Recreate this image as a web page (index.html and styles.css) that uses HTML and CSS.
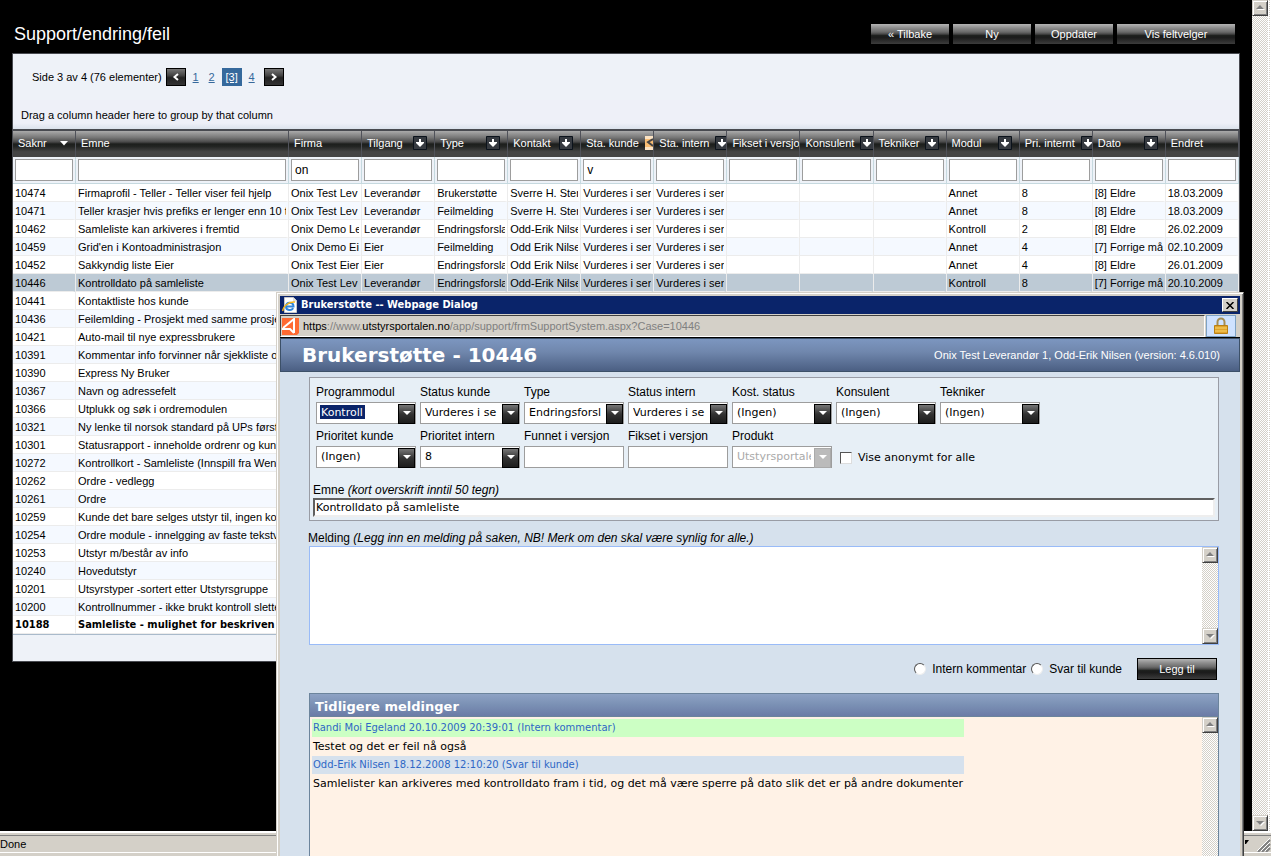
FILE: index.html
```html
<!DOCTYPE html>
<html lang="no">
<head>
<meta charset="utf-8">
<title>Support/endring/feil</title>
<link rel="stylesheet" href="styles.css">
</head>
<body>
<svg class="defs" width="0" height="0" aria-hidden="true">
  <symbol id="filter" viewBox="0 0 14 14"><path d="M.5.5h13v13H.5z" fill="#363a40" stroke="#0b121b"/><path d="M6 3h2v3h3v1L7 11 3 7V6h3z" fill="#fff"/></symbol>
  <symbol id="filter-on" viewBox="0 0 14 14"><path d="M0 0h14v14H0z" fill="#f9bd73"/><path d="M0 0h14v3H0zM0 11h14v3H0z" fill="#fbe3c4"/><path d="M8 3 3 6l5 4" stroke="#444" stroke-width="2" fill="none"/></symbol>
  <symbol id="up" viewBox="0 0 16 16"><path d="M5 10h8L9 6z" fill="#fff"/><path d="M4 9h8L8 5z" fill="#808080"/></symbol>
  <symbol id="down" viewBox="0 0 16 16"><path d="M5 7h8l-4 4z" fill="#fff"/><path d="M4 6h8l-4 4z" fill="#808080"/></symbol>
</svg>
<div class="screen">
  <main class="page">
    <header class="top">
      <h1>Support/endring/feil</h1>
      <nav class="actions">
        <button class="dark">« Tilbake</button>
        <button class="dark">Ny</button>
        <button class="dark">Oppdater</button>
        <button class="dark wide">Vis feltvelger</button>
      </nav>
    </header>
    <section class="panel">
      <div class="pager">
        <span>Side 3 av 4 (76 elementer)</span>
        <button class="step" aria-label="Forrige"><svg width="8" height="8" viewBox="0 0 8 8"><path d="M6 1 2.500 4 6 7" fill="none" stroke="#fff" stroke-width="2"/></svg></button>
        <a href="#">1</a><a href="#">2</a><a class="current" href="#">[3]</a><a href="#">4</a>
        <button class="step" aria-label="Neste"><svg width="8" height="8" viewBox="0 0 8 8"><path d="M2 1 5.500 4 2 7" fill="none" stroke="#fff" stroke-width="2"/></svg></button>
      </div>
      <div class="group">Drag a column header here to group by that column</div>
      <table class="grid">
        <colgroup><col class="c-id"><col class="c-subject"><col span="13"></colgroup>
        <thead>
          <tr class="heads">
            <th><div><span>Saknr</span><svg width="8" height="5" viewBox="0 0 8 5"><path d="M0 0h8L4 4.500z" fill="#fff"/></svg></div></th>
            <th><div><span>Emne</span></div></th>
            <th><div><span>Firma</span></div></th>
            <th><div><span>Tilgang</span><svg width="14" height="14"><use href="#filter"/></svg></div></th>
            <th><div><span>Type</span><svg width="14" height="14"><use href="#filter"/></svg></div></th>
            <th><div><span>Kontakt</span><svg width="14" height="14"><use href="#filter"/></svg></div></th>
            <th><div><span>Sta. kunde</span><svg width="14" height="14"><use href="#filter-on"/></svg></div></th>
            <th><div><span>Sta. intern</span><svg width="14" height="14"><use href="#filter"/></svg></div></th>
            <th><div><span>Fikset i versjon</span></div></th>
            <th><div><span>Konsulent</span><svg width="14" height="14"><use href="#filter"/></svg></div></th>
            <th><div><span>Tekniker</span><svg width="14" height="14"><use href="#filter"/></svg></div></th>
            <th><div><span>Modul</span><svg width="14" height="14"><use href="#filter"/></svg></div></th>
            <th><div><span>Pri. internt</span><svg width="14" height="14"><use href="#filter"/></svg></div></th>
            <th><div><span>Dato</span><svg width="14" height="14"><use href="#filter"/></svg></div></th>
            <th><div><span>Endret</span></div></th>
          </tr>
          <tr class="filters">
            <td><input aria-label="Saknr"></td><td><input aria-label="Emne"></td><td><input aria-label="Firma" value="on"></td><td><input aria-label="Tilgang"></td><td><input aria-label="Type"></td><td><input aria-label="Kontakt"></td><td><input aria-label="Sta. kunde" value="v"></td><td><input aria-label="Sta. intern"></td><td><input aria-label="Fikset i versjon"></td><td><input aria-label="Konsulent"></td><td><input aria-label="Tekniker"></td><td><input aria-label="Modul"></td><td><input aria-label="Pri. internt"></td><td><input aria-label="Dato"></td><td><input aria-label="Endret"></td>
          </tr>
        </thead>
        <tbody>
          <tr><td>10474</td><td>Firmaprofil - Teller - Teller viser feil hjelp</td><td>Onix Test Lev</td><td>Leverandør</td><td>Brukerstøtte</td><td>Sverre H. Sten</td><td>Vurderes i sen</td><td>Vurderes i sen</td><td></td><td></td><td></td><td>Annet</td><td>8</td><td>[8] Eldre</td><td>18.03.2009</td></tr>
          <tr><td>10471</td><td>Teller krasjer hvis prefiks er lenger enn 10 t</td><td>Onix Test Lev</td><td>Leverandør</td><td>Feilmelding</td><td>Sverre H. Sten</td><td>Vurderes i sen</td><td>Vurderes i sen</td><td></td><td></td><td></td><td>Annet</td><td>8</td><td>[8] Eldre</td><td>18.03.2009</td></tr>
          <tr><td>10462</td><td>Samleliste kan arkiveres i fremtid</td><td>Onix Demo Le</td><td>Leverandør</td><td>Endringsforsla</td><td>Odd-Erik Nilse</td><td>Vurderes i sen</td><td>Vurderes i sen</td><td></td><td></td><td></td><td>Kontroll</td><td>2</td><td>[8] Eldre</td><td>26.02.2009</td></tr>
          <tr><td>10459</td><td>Grid'en i Kontoadministrasjon</td><td>Onix Demo Eie</td><td>Eier</td><td>Feilmelding</td><td>Odd Erik Nilsen</td><td>Vurderes i sen</td><td>Vurderes i sen</td><td></td><td></td><td></td><td>Annet</td><td>4</td><td>[7] Forrige må</td><td>02.10.2009</td></tr>
          <tr><td>10452</td><td>Sakkyndig liste Eier</td><td>Onix Test Eier</td><td>Eier</td><td>Endringsforsla</td><td>Odd Erik Nilsen</td><td>Vurderes i sen</td><td>Vurderes i sen</td><td></td><td></td><td></td><td>Annet</td><td>4</td><td>[8] Eldre</td><td>26.01.2009</td></tr>
          <tr class="selected"><td>10446</td><td>Kontrolldato på samleliste</td><td>Onix Test Lev</td><td>Leverandør</td><td>Endringsforsla</td><td>Odd-Erik Nilse</td><td>Vurderes i sen</td><td>Vurderes i sen</td><td></td><td></td><td></td><td>Kontroll</td><td>8</td><td>[7] Forrige må</td><td>20.10.2009</td></tr>
          <tr><td>10441</td><td>Kontaktliste hos kunde</td><td colspan="13"></td></tr>
          <tr><td>10436</td><td>Feilemlding - Prosjekt med samme prosjek</td><td colspan="13"></td></tr>
          <tr><td>10421</td><td>Auto-mail til nye expressbrukere</td><td colspan="13"></td></tr>
          <tr><td>10391</td><td>Kommentar info forvinner når sjekkliste op</td><td colspan="13"></td></tr>
          <tr><td>10390</td><td>Express Ny Bruker</td><td colspan="13"></td></tr>
          <tr><td>10367</td><td>Navn og adressefelt</td><td colspan="13"></td></tr>
          <tr><td>10366</td><td>Utplukk og søk i ordremodulen</td><td colspan="13"></td></tr>
          <tr><td>10321</td><td>Ny lenke til norsok standard på UPs første</td><td colspan="13"></td></tr>
          <tr><td>10301</td><td>Statusrapport - inneholde ordrenr og kun</td><td colspan="13"></td></tr>
          <tr><td>10272</td><td>Kontrollkort - Samleliste (Innspill fra Wena</td><td colspan="13"></td></tr>
          <tr><td>10262</td><td>Ordre - vedlegg</td><td colspan="13"></td></tr>
          <tr><td>10261</td><td>Ordre</td><td colspan="13"></td></tr>
          <tr><td>10259</td><td>Kunde det bare selges utstyr til, ingen ko</td><td colspan="13"></td></tr>
          <tr><td>10254</td><td>Ordre module - innelgging av faste tekstv</td><td colspan="13"></td></tr>
          <tr><td>10253</td><td>Utstyr m/består av info</td><td colspan="13"></td></tr>
          <tr><td>10240</td><td>Hovedutstyr</td><td colspan="13"></td></tr>
          <tr><td>10201</td><td>Utsyrstyper -sortert etter Utstyrsgruppe</td><td colspan="13"></td></tr>
          <tr><td>10200</td><td>Kontrollnummer - ikke brukt kontroll slette</td><td colspan="13"></td></tr>
          <tr class="unread"><td>10188</td><td>Samleliste - mulighet for beskriven</td><td colspan="13"></td></tr>
        </tbody>
      </table>
      <div class="foot"></div>
    </section>
  </main>
  <div class="scroll page-scroll"><button aria-label="Rull opp"><svg width="16" height="16"><use href="#up"/></svg></button><button aria-label="Rull ned"><svg width="16" height="16"><use href="#down"/></svg></button></div>
  <footer class="status"><div><span>Done</span><svg class="grip" width="26" height="16" viewBox="0 0 26 16"><path d="M0 4h4L1 8H0z" fill="#000"/><path d="M13 16 25 4M17 16l8-8M21 16l4-4" stroke="#808080" stroke-width="2"/><path d="M12 15 25 2M16 15l9-9M20 15l5-5" stroke="#fff"/></svg></div></footer>
</div>

<section class="dialog" role="dialog" aria-labelledby="dlg-title">
  <div class="titlebar">
    <svg width="16" height="16" viewBox="0 0 16 16"><path d="M2.500.5h9l3 3v12h-12z" fill="#fff" stroke="#c9c9c9"/><path d="M11 .5v4h4" fill="#ddd"/><path d="M4 9.500h7.500c0-5-7.500-5-7.500 0 0 4.500 6 4.500 7 1.500" fill="none" stroke="#2f86dc" stroke-width="2"/><path d="M1 14C0 11 6 4 13 5" fill="none" stroke="#f3b51b" stroke-width="1.500"/></svg>
    <span id="dlg-title">Brukerstøtte -- Webpage Dialog</span>
    <button class="close" aria-label="Lukk"><svg width="8" height="7" viewBox="0 0 8 7"><path d="m.5 0 7 7M7.500 0l-7 7" stroke="#000" stroke-width="1.500"/></svg></button>
  </div>
  <div class="address">
    <div class="url"><svg width="17" height="17" viewBox="0 0 17 17"><path d="M0 0h17v15l-2 2H0z" fill="#ff6a32"/><path d="M1 10 12 1v14M0 11h8l4 4" fill="none" stroke="#fff" stroke-width="2"/></svg><span><b>https</b>://www.<b>utstyrsportalen.no</b>/app/support/frmSupportSystem.aspx?Case=10446</span></div>
    <div class="lock"><svg width="16" height="18" viewBox="0 0 16 18"><path d="M4.500 9V5a3.500 3.500 0 0 1 7 0v4" fill="none" stroke="#a78d52" stroke-width="2"/><path d="M1.500 8.500h13v8h-13z" fill="#e0a32c" stroke="#b98016"/><path d="M2 11h12M2 14h12" stroke="#f8d66c"/></svg></div>
  </div>
  <header class="case"><h2>Brukerstøtte - 10446</h2><span>Onix Test Leverandør 1, Odd-Erik Nilsen (version: 4.6.010)</span></header>
  <form class="form">
    <div class="box">
      <div class="fields">
        <label>Programmodul<span class="pick"><select class="marked"><option>Kontroll</option></select></span></label>
        <label>Status kunde<span class="pick"><select><option>Vurderes i se</option></select></span></label>
        <label>Type<span class="pick"><select><option>Endringsforsl</option></select></span></label>
        <label>Status intern<span class="pick"><select><option>Vurderes i se</option></select></span></label>
        <label>Kost. status<span class="pick"><select><option>(Ingen)</option></select></span></label>
        <label>Konsulent<span class="pick"><select><option>(Ingen)</option></select></span></label>
        <label>Tekniker<span class="pick"><select><option>(Ingen)</option></select></span></label>
        <label>Prioritet kunde<span class="pick"><select><option>(Ingen)</option></select></span></label>
        <label>Prioritet intern<span class="pick"><select><option>8</option></select></span></label>
        <label>Funnet i versjon<input class="text"></label>
        <label>Fikset i versjon<input class="text"></label>
        <label>Produkt<span class="pick off"><select disabled><option>Utstyrsportale</option></select></span></label>
        <label class="check"><input type="checkbox">Vise anonymt for alle</label>
      </div>
      <label class="subject"><span>Emne <i>(kort overskrift inntil 50 tegn)</i></span><input value="Kontrolldato på samleliste"></label>
    </div>
    <label class="msg-label" for="msg">Melding <i>(Legg inn en melding på saken, NB! Merk om den skal være synlig for alle.)</i></label>
    <div class="msg"><textarea id="msg"></textarea><div class="scroll"><button type="button" aria-label="Rull opp"><svg width="16" height="16"><use href="#up"/></svg></button><button type="button" aria-label="Rull ned"><svg width="16" height="16"><use href="#down"/></svg></button></div></div>
    <div class="send">
      <label><input type="radio" name="kind">Intern kommentar</label>
      <label><input type="radio" name="kind">Svar til kunde</label>
      <button type="button" class="dark">Legg til</button>
    </div>
    <section class="log">
      <h3>Tidligere meldinger</h3>
      <div class="log-body">
        <div class="entries">
          <div class="meta internal">Randi Moi Egeland 20.10.2009 20:39:01 (Intern kommentar)</div>
          <p>Testet og det er feil nå også</p>
          <div class="meta">Odd-Erik Nilsen 18.12.2008 12:10:20 (Svar til kunde)</div>
          <p>Samlelister kan arkiveres med kontrolldato fram i tid, og det må være sperre på dato slik det er på andre dokumenter</p>
        </div>
        <div class="scroll"><button type="button" aria-label="Rull opp"><svg width="16" height="16"><use href="#up"/></svg></button></div>
      </div>
    </section>
  </form>
</section>
</body>
</html>
```
FILE: styles.css
```css
:root {
  --ui: "Liberation Sans", Arial, sans-serif;
  --strong: "DejaVu Sans Condensed", sans-serif;
  --wide: "DejaVu Sans", sans-serif;
  --face: #d4d0c8;
  --line: #ececec;
  --gloss: linear-gradient(#b4b4b4 0, #8c8c8c 20%, #6a6a6a 40%, #484848 50%, #1c1e1c 58%, #1c1c1c 68%, #3c3c3c 100%);
}
* { box-sizing: border-box; }
body { margin: 0; height: 100vh; overflow: hidden; background: #000; font: 11px/16px var(--ui); color: #000; }
button, input, select, textarea { font: inherit; margin: 0; padding: 0; border-radius: 0; }
svg { display: block; flex: none; }
.defs { position: absolute; }
.screen { height: 100vh; display: grid; grid-template: minmax(0, 1fr) 25px / minmax(0, 1fr) 19px; }
.page { padding: 0 12px; overflow: hidden; }
.top { display: flex; align-items: center; justify-content: space-between; height: 53px; padding: 15px 5px 0 2px; }
h1 { margin: 0; font-size: 18px; line-height: 24px; font-weight: 400; color: #fff; }
.actions { display: flex; gap: 4px; }
.dark { width: 78px; height: 20px; border: 0; background: var(--gloss); color: #fff; }
.dark.wide { width: 118px; }
.panel { border: 1px solid #484a50; background: #eef2f8; }
.pager { display: flex; align-items: center; height: 46px; padding-left: 19px; }
.pager a { width: 16px; text-align: center; color: #35699c; }
.pager a.current { width: 20px; line-height: 18px; margin: 0 2px; background: #35699c; color: #fff; }
.step { display: grid; place-items: center; width: 20px; height: 18px; margin: 0 2px 0 4px; border: 1px solid #000; background: linear-gradient(#777, #444 40%, #222 55%, #333); }
.group { height: 29px; padding: 7px 8px 0; background: linear-gradient(#eef0f8 80%, #dbe2ec); }
.grid { width: 100%; table-layout: fixed; border-spacing: 0; border-top: 2px solid #484a50; border-bottom: 1px solid #a9bacb; background: #fff; }
.c-id { width: 63px; }
.c-subject { width: 213px; }
.heads th { height: 26px; padding: 0; overflow: hidden; border-right: 1px solid #50525a; background: linear-gradient(#aaa 0, #777 25%, #4a4a4a 42%, #1c1e1c 50%, #232523 60%, #444 80%, #444 100%); color: #fff; font-weight: 400; }
.heads div { display: flex; align-items: center; justify-content: space-between; gap: 6px; padding: 0 7px 2px 5px; white-space: nowrap; }
.filters td { height: 27px; padding: 1px 2px; background: #eef2f8; border-right: 1px solid #c6d9df; border-bottom: 1px solid #c6d9df; }
.filters input { display: block; width: 100%; height: 22px; padding: 0 3px; border: 1px solid #9d9d9d; font-size: 12px; background: #fff; }
/* The transparent right border clips long values short of the column line. */
tbody td { height: 18px; padding: 0 0 0 2px; line-height: 16px; overflow: hidden; white-space: nowrap; border-right: 3px solid transparent; border-bottom: 1px solid var(--line); background: linear-gradient(var(--line), var(--line)) right / 1px 100% no-repeat border-box #fff; }
tbody tr:nth-child(even) td { background-color: #f5f9ff; }
tbody tr.selected td { background-color: #bdcad5; }
.unread { font-family: var(--strong); font-weight: 700; }
.foot { height: 26px; }
.scroll { display: flex; flex-direction: column; justify-content: space-between; width: 16px; background: repeating-conic-gradient(#d4d0c8 0 25%, #fff 0 50%) 0 0 / 2px 2px; }
.scroll button { width: 16px; height: 16px; border: 1px solid; border-color: var(--face) #404040 #404040 var(--face); background: var(--face); box-shadow: inset 1px 1px #fff, inset -1px -1px #808080; }
.scroll button svg { margin: -1px; }
.page-scroll { width: 19px; border-right: 3px double #fff; }
.status { grid-column: 1 / -1; padding: 4px 0 3px; background: var(--face); box-shadow: inset 0 2px #fff; }
.status div { height: 18px; display: flex; justify-content: space-between; border-top: 1px solid #808080; border-bottom: 1px solid #fff; }

.dialog { position: absolute; left: 276px; top: 292px; right: 27px; bottom: 0; display: flex; flex-direction: column; padding: 3px 3px 0; border: 1px solid; border-color: var(--face) #404040 var(--face) var(--face); border-bottom: 0; background: var(--face); box-shadow: inset 1px 1px #fff, inset -1px 0 #808080; }
.titlebar { display: flex; align-items: center; gap: 3px; height: 18px; padding: 0 2px; background: #0a246a; color: #fff; font-family: var(--strong); font-weight: 700; }
.close { display: grid; place-items: center; width: 16px; height: 14px; margin-left: auto; background: var(--face); border: 1px solid; border-color: #fff #404040 #404040 #fff; }
.address { display: flex; height: 24px; padding: 1px 4px 0 0; border-bottom: 1px solid #000; }
.url { flex: 1; display: flex; align-items: center; gap: 4px; padding-left: 1px; border: 1px solid; border-color: #404040 #fff #fff #404040; color: #808080; margin-right: 1px; }
.url b { font-weight: 400; color: #000; }
.lock { display: grid; place-items: center; width: 30px; border: 1px solid #7ea2c4; background: #cfe2ff; }
.case { display: flex; align-items: center; justify-content: space-between; height: 34px; padding: 0 19px 0 21px; border: 1px solid #3c5068; background: linear-gradient(#7c96c0, #7087ad 40%, #4b5f83); color: #fff; }
h2 { margin: 0; font: 700 20px/24px var(--wide); }
.form { flex: 1; display: flex; flex-direction: column; min-height: 0; padding: 5px 21px 0 29px; background: #d6e1ed; font-size: 12px; }
.box { padding: 5px 3px 3px; border: 1px solid #999ca5; background: #e7eff6; }
.fields { display: grid; grid-template-columns: repeat(7, 100px); gap: 0 4px; padding-left: 3px; }
.fields label { display: block; height: 44px; line-height: 19px; }
.pick { display: block; position: relative; }
.pick select, .text { display: block; width: 100px; height: 22px; padding: 0 20px 0 4px; border: 1px solid #9d9d9d; background: #fff; color: #000; appearance: none; font: 11px/16px var(--wide); }
.pick::before { content: ""; position: absolute; right: 1px; top: 2px; width: 15px; height: 18px; border: 1px solid #000; background: linear-gradient(#777, #333 50%, #1c1c1c); }
.pick::after { content: ""; position: absolute; right: 5px; top: 9px; border: 4px solid transparent; border-top-color: #fff; border-bottom: 0; }
.pick select.marked { color: #fff; background: linear-gradient(#0a246a, #0a246a) 3px 2px / 45px 14px no-repeat #fff; }
.pick.off select { color: #aaa; opacity: 1; }
.pick.off::before { border-color: #aaa; background: #bbb; }
.fields label.check { grid-column: span 2; display: flex; align-items: center; gap: 6px; padding: 18px 0 0 4px; font: 11px/16px var(--wide); }
.check input { appearance: none; width: 12px; height: 12px; background: #fff; border: 1px solid; border-color: #555 #ddd #ddd #555; }
.subject { display: block; padding-top: 11px; line-height: 16px; }
.subject span { display: block; }
.subject input { display: block; width: 100%; height: 19px; padding: 0 1px; border: 2px solid; border-color: #606060 #eee #eee #606060; background: #fff; font: 11px/14px var(--wide); }
.msg-label { display: block; padding: 9px 0 0; margin-left: -1px; }
.msg { display: flex; height: 99px; border: 1px solid #99bbf8; background: #fff; }
.msg textarea { flex: 1; border: 0; resize: none; background: #fff; }
.send { display: flex; align-items: center; justify-content: flex-end; gap: 5px; height: 48px; padding-right: 2px; }
.send label { display: flex; align-items: center; gap: 6px; }
.send input { appearance: none; width: 12px; height: 12px; border: 1px solid; border-color: #555 #eee #eee #555; border-radius: 50%; background: #fff; }
.send .dark { width: 80px; height: 22px; margin-left: 10px; border: 1px solid #000; font-size: 11px; }
.log { flex: 1; display: flex; flex-direction: column; min-height: 0; border: 1px solid #6c849c; border-bottom: 0; background: #fff2e6; }
h3 { margin: 0; height: 23px; padding: 3px 5px 0; border-bottom: 1px solid #6c849c; background: linear-gradient(#8ea2c4, #7a90b4 50%, #6c7ba6); color: #fff; font: 700 13px/20px var(--wide); }
.log-body { flex: 1; display: flex; justify-content: space-between; min-height: 0; }
.entries { padding: 2px; font: 11px/19px var(--wide); }
.entries p { margin: 0; padding: 0 1px; }
.meta { height: 18px; padding: 0 1px; background: #d6e1ed; color: #2e67c5; font-size: 10px; line-height: 18px; }
.internal { background: #ccffc4; }
```
